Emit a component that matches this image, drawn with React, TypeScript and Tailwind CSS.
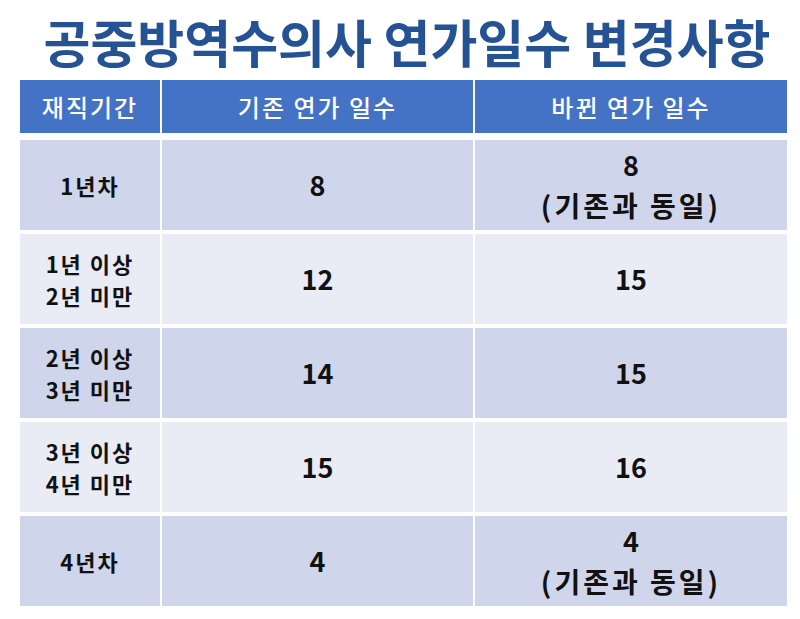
const rows = [
    { period: ["1년차"], before: "8", after: ["8", "(기존과 동일)"] },
    { period: ["1년 이상", "2년 미만"], before: "12", after: ["15"] },
    { period: ["2년 이상", "3년 미만"], before: "14", after: ["15"] },
    { period: ["3년 이상", "4년 미만"], before: "15", after: ["16"] },
    { period: ["4년차"], before: "4", after: ["4", "(기존과 동일)"] },
];

export default function App() {
    return (
        <div
            className="h-[619px] w-[800px] bg-white"
            style={{ fontFamily: '"Noto Sans CJK KR", "Noto Sans", sans-serif' }}
        >
            {/* Title */}
            <h1 className="h-[80px] pl-[14px] pt-[10px] text-center text-[51px] font-bold leading-[62px] text-[#245293]">
                공중방역수의사 연가일수 변경사항
            </h1>

            {/* Table */}
            <div className="ml-[20px] w-[767px]">
                <div className="grid h-[53px] grid-cols-[140px_311px_312px] gap-x-[2px] text-[24px] font-medium tracking-[2px] text-white">
                    <div className="flex items-center justify-center bg-[#4472c4]">재직기간</div>
                    <div className="flex items-center justify-center bg-[#4472c4]">기존 연가 일수</div>
                    <div className="flex items-center justify-center bg-[#4472c4]">바뀐 연가 일수</div>
                </div>

                <div className="mt-[7px] flex flex-col gap-[4px] font-bold text-[#111]">
                    {rows.map((row, i) => {
                        const bg = i % 2 === 0 ? "bg-[#cfd5ea]" : "bg-[#e9ebf5]";
                        return (
                            <div
                                key={i}
                                className="grid h-[90px] grid-cols-[140px_311px_312px] gap-x-[2px]"
                            >
                                <div className={`flex flex-col items-center justify-center text-[22px] leading-[32px] tracking-[2px] ${bg}`}>
                                    {row.period.map((p) => (
                                        <span key={p}>{p}</span>
                                    ))}
                                </div>
                                <div className={`flex items-center justify-center text-[27px] ${bg}`}>
                                    {row.before}
                                </div>
                                <div className={`flex flex-col items-center justify-center text-[27px] leading-[40px] ${bg}`}>
                                    {row.after.map((a, j) => (
                                        <span key={a} className={j === 1 ? "text-[28px] tracking-[3px]" : ""}>
                                            {a}
                                        </span>
                                    ))}
                                </div>
                            </div>
                        );
                    })}
                </div>
            </div>
        </div>
    );
}
